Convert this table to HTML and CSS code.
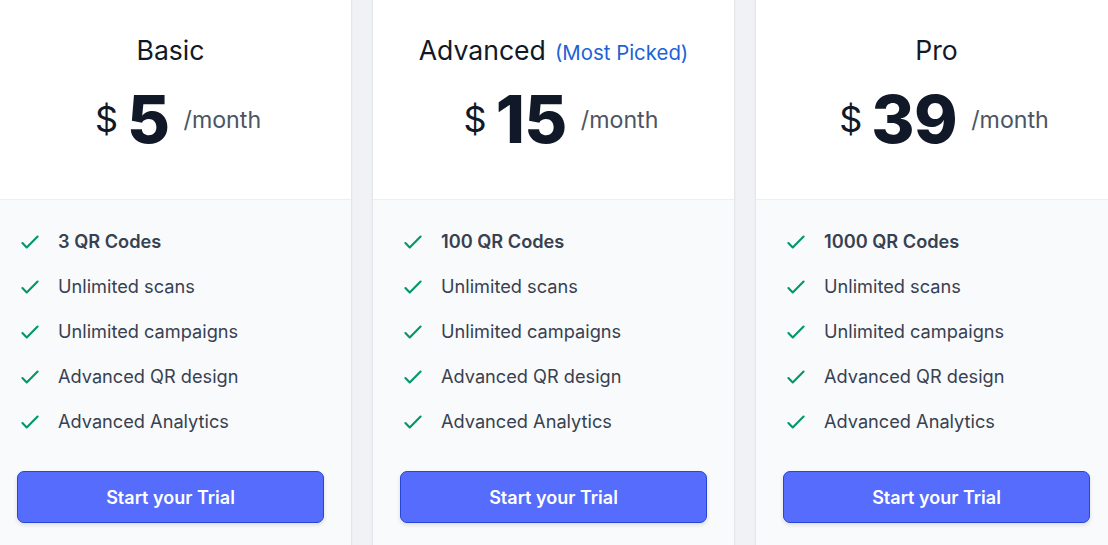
FILE: index.html
```html
<!DOCTYPE html>
<html lang="en">
<head>
<meta charset="utf-8">
<title>Pricing</title>
<link rel="stylesheet" href="styles.css">
</head>
<body>
<div class="plans">
  <section class="card">
    <header class="card-head">
      <h2 class="plan-name">Basic</h2>
      <div class="price"><span class="cur">$</span><span class="amount">5</span><span class="per">/month</span></div>
    </header>
    <div class="card-body">
      <ul class="features">
        <li class="feat strong"><svg class="check" viewBox="0 0 24 24"><path d="M5 13l4 4L19 7"/></svg><span>3 QR Codes</span></li>
        <li class="feat"><svg class="check" viewBox="0 0 24 24"><path d="M5 13l4 4L19 7"/></svg><span>Unlimited scans</span></li>
        <li class="feat"><svg class="check" viewBox="0 0 24 24"><path d="M5 13l4 4L19 7"/></svg><span>Unlimited campaigns</span></li>
        <li class="feat"><svg class="check" viewBox="0 0 24 24"><path d="M5 13l4 4L19 7"/></svg><span>Advanced QR design</span></li>
        <li class="feat"><svg class="check" viewBox="0 0 24 24"><path d="M5 13l4 4L19 7"/></svg><span>Advanced Analytics</span></li>
      </ul>
      <button class="cta">Start your Trial</button>
    </div>
  </section>
  <section class="card">
    <header class="card-head">
      <h2 class="plan-name">Advanced <span class="tag">(Most Picked)</span></h2>
      <div class="price"><span class="cur">$</span><span class="amount">15</span><span class="per">/month</span></div>
    </header>
    <div class="card-body">
      <ul class="features">
        <li class="feat strong"><svg class="check" viewBox="0 0 24 24"><path d="M5 13l4 4L19 7"/></svg><span>100 QR Codes</span></li>
        <li class="feat"><svg class="check" viewBox="0 0 24 24"><path d="M5 13l4 4L19 7"/></svg><span>Unlimited scans</span></li>
        <li class="feat"><svg class="check" viewBox="0 0 24 24"><path d="M5 13l4 4L19 7"/></svg><span>Unlimited campaigns</span></li>
        <li class="feat"><svg class="check" viewBox="0 0 24 24"><path d="M5 13l4 4L19 7"/></svg><span>Advanced QR design</span></li>
        <li class="feat"><svg class="check" viewBox="0 0 24 24"><path d="M5 13l4 4L19 7"/></svg><span>Advanced Analytics</span></li>
      </ul>
      <button class="cta">Start your Trial</button>
    </div>
  </section>
  <section class="card">
    <header class="card-head">
      <h2 class="plan-name">Pro</h2>
      <div class="price"><span class="cur">$</span><span class="amount">39</span><span class="per">/month</span></div>
    </header>
    <div class="card-body">
      <ul class="features">
        <li class="feat strong"><svg class="check" viewBox="0 0 24 24"><path d="M5 13l4 4L19 7"/></svg><span>1000 QR Codes</span></li>
        <li class="feat"><svg class="check" viewBox="0 0 24 24"><path d="M5 13l4 4L19 7"/></svg><span>Unlimited scans</span></li>
        <li class="feat"><svg class="check" viewBox="0 0 24 24"><path d="M5 13l4 4L19 7"/></svg><span>Unlimited campaigns</span></li>
        <li class="feat"><svg class="check" viewBox="0 0 24 24"><path d="M5 13l4 4L19 7"/></svg><span>Advanced QR design</span></li>
        <li class="feat"><svg class="check" viewBox="0 0 24 24"><path d="M5 13l4 4L19 7"/></svg><span>Advanced Analytics</span></li>
      </ul>
      <button class="cta">Start your Trial</button>
    </div>
  </section>
</div>
</body>
</html>
```
FILE: styles.css
```css
* { box-sizing: border-box; }
html, body {
  margin: 0;
  padding: 0;
  width: 1108px;
  height: 545px;
  overflow: hidden;
  background: #f1f2f6;
  font-family: Inter, "Liberation Sans", sans-serif;
}
.plans {
  display: flex;
  gap: 22px;
  margin-left: -10px;
  margin-top: -10px;
  height: 555px;
  overflow: hidden;
}
.card {
  flex: 0 0 361px;
  width: 361px;
  height: 600px;
  border-radius: 8px;
  overflow: hidden;
  background: #f9fafb;
  box-shadow: 0 1px 3px rgba(0, 0, 0, 0.1), 0 1px 2px rgba(0, 0, 0, 0.06);
  display: flex;
  flex-direction: column;
}
.card-head {
  background: #ffffff;
  padding: 44px 27px 47px;
  display: flex;
  flex-direction: column;
  align-items: center;
  gap: 20px;
  border-bottom: 1px solid #eceef2;
}
.plan-name {
  margin: 0;
  height: 32px;
  display: flex;
  align-items: baseline;
  justify-content: center;
  gap: 9px;
  font-size: 26.6px;
  line-height: 32px;
  font-weight: 400;
  color: #111827;
  white-space: nowrap;
}
.tag {
  font-size: 20.4px;
  line-height: 32px;
  color: #1d62d6;
}
.price {
  display: flex;
  align-items: center;
  height: 66px;
  padding-left: 15px;
}
.cur {
  font-size: 36px;
  line-height: 1;
  color: #111827;
  margin-right: 9px;
}
.amount {
  font-size: 66px;
  line-height: 1;
  font-weight: 800;
  color: #111827;
  letter-spacing: -0.5px;
}
.per {
  font-size: 23.2px;
  line-height: 1;
  color: #4b5563;
  margin-left: 14px;
  padding-top: 3px;
}
.card-body {
  padding: 28px 27px 0;
  display: flex;
  flex-direction: column;
}
.features {
  list-style: none;
  margin: 0;
  padding: 0;
  display: flex;
  flex-direction: column;
  gap: 18px;
}
.feat {
  display: flex;
  align-items: center;
  gap: 15px;
  font-size: 18.2px;
  line-height: 27px;
  color: #374151;
}
.feat.strong { font-weight: 600; }
.check {
  width: 26px;
  height: 26px;
  flex: none;
  fill: none;
  stroke: #059669;
  stroke-width: 2;
  stroke-linecap: round;
  stroke-linejoin: round;
}
.cta {
  margin-top: 36px;
  height: 52px;
  width: 100%;
  border: 1px solid #2746d6;
  border-radius: 7px;
  background: #556cfd;
  color: #ffffff;
  font-family: Inter, "Liberation Sans", sans-serif;
  font-size: 18px;
  font-weight: 600;
  box-shadow: 0 2px 4px rgba(0, 0, 0, 0.12);
  cursor: pointer;
}
```
